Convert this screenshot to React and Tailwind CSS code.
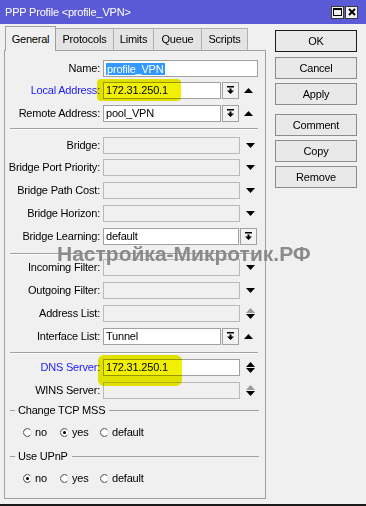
import React from 'react';

// Winbox "PPP Profile" dialog

function UpTri({ color = '#000' }) {
  return (
    <svg width="9" height="5" viewBox="0 0 9 5">
      <path d="M4.5 0L9 5H0z" fill={color} />
    </svg>
  );
}

function DownTri({ color = '#000' }) {
  return (
    <svg width="9" height="5" viewBox="0 0 9 5">
      <path d="M0 0H9L4.5 5z" fill={color} />
    </svg>
  );
}

function UpDown({ upColor = '#000' }) {
  return (
    <svg width="9" height="11" viewBox="0 0 9 11">
      <path d="M4.5 0L9 5H0z" fill={upColor} />
      <path d="M0 6H9L4.5 11z" fill="#000" />
    </svg>
  );
}

function DropBtn() {
  return (
    <div className="w-[17px] h-[17px] border border-[#a0a0a0] bg-[#f3f3f3] flex items-center justify-center">
      <svg width="9" height="9" viewBox="0 0 9 9">
        <rect x="1" y="0" width="7" height="1.5" fill="#000" />
        <path d="M3.5 2.5h2v2H8L4.5 8 1 4.5h2.5z" fill="#000" />
      </svg>
    </div>
  );
}

function Field({ w, children }) {
  return (
    <div className={`${w} h-[17px] border border-[#a0a0a0] bg-white flex items-center pl-[2px] whitespace-nowrap leading-[13px]`}>
      {children}
    </div>
  );
}

function Empty() {
  return <div className="w-[137px] h-[17px] border border-[#b9b9b9] bg-[#f0f0f0]" />;
}

function Row({ label, blue, className = '', children }) {
  return (
    <div className={`flex items-center h-[17px] ${className}`}>
      <div className={`w-[95px] text-right whitespace-nowrap leading-[13px] ${blue ? 'text-[#1a1aff]' : 'text-black'}`}>{label}</div>
      <div className="ml-[3px] flex items-center">{children}</div>
    </div>
  );
}

function Sep({ className = '' }) {
  return <div className={`ml-[5px] w-[248px] border-t border-[#a0a0a0] border-b border-b-white ${className}`} />;
}

function Radio({ checked }) {
  return (
    <svg width="9" height="9" viewBox="0 0 9 9">
      <circle cx="4.5" cy="4.5" r="4" fill="#fff" />
      <path d="M7.3 1.7A4 4 0 1 0 7.3 7.3" stroke="#4a4a4a" strokeWidth="1" fill="none" />
      <path d="M7.3 1.7A4 4 0 0 1 7.3 7.3" stroke="#d8d8d8" strokeWidth="1" fill="none" />
      {checked && <circle cx="4.5" cy="4.5" r="1.5" fill="#000" />}
    </svg>
  );
}

function RadioRow({ value, className = '' }) {
  const opts = [
    ['no', 'w-[37px]'],
    ['yes', 'w-[40px]'],
    ['default', 'w-[60px]'],
  ];
  return (
    <div className={`flex items-center h-[13px] pl-[18px] ${className}`}>
      {opts.map(([o, w]) => (
        <div key={o} className={`${w} flex items-center gap-[3px]`}>
          <Radio checked={o === value} />
          <span>{o}</span>
        </div>
      ))}
    </div>
  );
}

function Group({ title, className = '' }) {
  return (
    <div className={`flex items-center h-[13px] ${className}`}>
      <div className="ml-[5px] w-[5px] border-t border-[#a0a0a0]" />
      <span className="ml-[3px]">{title}</span>
      <div className="ml-[4px] mr-[6px] flex-1 border-t border-[#a0a0a0]" />
    </div>
  );
}

function Btn({ children, ok, className = '' }) {
  return (
    <div
      className={`h-[22px] w-[82px] flex items-center justify-center bg-[#e9e9e9] border ${
        ok ? 'border-[#1c1c1c]' : 'border-[#8c8c8c]'
      } ${className}`}
    >
      {children}
    </div>
  );
}

export default function App() {
  const tabs = [
    ['Protocols', 'w-[58px]'],
    ['Limits', 'w-[40px]'],
    ['Queue', 'w-[48px]'],
    ['Scripts', 'w-[46px]'],
  ];

  return (
    <div className="relative w-[366px] h-[506px] overflow-hidden bg-[#f0f0f0] border-b-[2px] border-[#1a1a1a] font-['Liberation_Sans',Arial,sans-serif] text-[11px] tracking-[-0.2px] text-black">
      {/* Title bar */}
      <div className="h-[24px] bg-[#5a5ad6] flex items-center pl-[5px] pr-[8px] text-white text-[11px]">
        <span>PPP Profile &lt;profile_VPN&gt;</span>
        <div className="ml-auto flex gap-[1px]">
          <div className="w-[13px] h-[13px] bg-[#efefef] border border-[#3a3a3a] flex items-center justify-center">
            <svg width="9" height="8" viewBox="0 0 9 8">
              <rect x="0.5" y="0.5" width="8" height="7" fill="none" stroke="#000" />
              <rect x="0" y="0" width="9" height="2" fill="#000" />
            </svg>
          </div>
          <div className="w-[13px] h-[13px] bg-[#efefef] border border-[#3a3a3a] flex items-center justify-center">
            <svg width="8" height="8" viewBox="0 0 8 8">
              <path d="M1 1L7 7M7 1L1 7" stroke="#000" strokeWidth="1.8" />
            </svg>
          </div>
        </div>
      </div>

      <div className="flex pl-[4px]">
        {/* Left: tabs + panel */}
        <div className="w-[262px] mt-[2px]">
          <div className="flex items-end h-[24px] pl-[1px]">
            <div className="relative z-10 -mb-px w-[51px] h-[25px] bg-[#f0f0f0] border border-b-0 border-[#a0a0a0] flex items-center justify-center">
              General
            </div>
            {tabs.map(([t, w]) => (
              <div key={t} className={`${w} h-[22px] bg-[#e4e4e4] border border-b-0 border-l-0 border-[#b0b0b0] flex items-center justify-center`}>
                {t}
              </div>
            ))}
          </div>

          <div className="h-[449px] border border-[#a0a0a0] flex flex-col">
            <Row label="Name:" className="mt-[9px]">
              <Field w="w-[155px]">
                <span className="bg-[#3399ff] text-white leading-[12px] px-px">profile_VPN</span>
              </Field>
            </Row>
            <Row label="Local Address:" blue className="mt-[5px]">
              <Field w="w-[118px]">172.31.250.1</Field>
              <div className="ml-px"><DropBtn /></div>
              <div className="ml-[5px]"><UpTri /></div>
            </Row>
            <Row label="Remote Address:" className="mt-[6px]">
              <Field w="w-[118px]">pool_VPN</Field>
              <div className="ml-px"><DropBtn /></div>
              <div className="ml-[5px]"><UpTri /></div>
            </Row>

            <Sep className="mt-[6px]" />

            <Row label="Bridge:" className="mt-[7px]">
              <Empty />
              <div className="ml-[6px]"><DownTri /></div>
            </Row>
            <Row label="Bridge Port Priority:" className="mt-[5px]">
              <Empty />
              <div className="ml-[6px]"><DownTri /></div>
            </Row>
            <Row label="Bridge Path Cost:" className="mt-[6px]">
              <Empty />
              <div className="ml-[6px]"><DownTri /></div>
            </Row>
            <Row label="Bridge Horizon:" className="mt-[6px]">
              <Empty />
              <div className="ml-[6px]"><DownTri /></div>
            </Row>
            <Row label="Bridge Learning:" className="mt-[6px]">
              <Field w="w-[136px]">default</Field>
              <div className="ml-px"><DropBtn /></div>
            </Row>

            <Sep className="mt-[8px]" />

            <Row label="Incoming Filter:" className="mt-[4px]">
              <Empty />
              <div className="ml-[6px]"><DownTri /></div>
            </Row>
            <Row label="Outgoing Filter:" className="mt-[6px]">
              <Empty />
              <div className="ml-[6px]"><DownTri /></div>
            </Row>
            <Row label="Address List:" className="mt-[6px]">
              <Empty />
              <div className="ml-[6px]"><UpDown upColor="#9a9a9a" /></div>
            </Row>
            <Row label="Interface List:" className="mt-[6px]">
              <Field w="w-[118px]">Tunnel</Field>
              <div className="ml-px"><DropBtn /></div>
              <div className="ml-[5px]"><UpTri /></div>
            </Row>

            <Sep className="mt-[7px]" />

            <Row label="DNS Server:" blue className="mt-[5px]">
              <Field w="w-[137px]">172.31.250.1</Field>
              <div className="ml-[6px]"><UpDown /></div>
            </Row>
            <Row label="WINS Server:" className="mt-[6px]">
              <Empty />
              <div className="ml-[6px]"><UpDown upColor="#9a9a9a" /></div>
            </Row>

            <Group title="Change TCP MSS" className="mt-[5px]" />
            <RadioRow value="yes" className="mt-[9px]" />
            <Group title="Use UPnP" className="mt-[11px]" />
            <RadioRow value="no" className="mt-[9px]" />
          </div>
        </div>

        {/* Right: buttons */}
        <div className="ml-[9px] mt-[6px] flex flex-col">
          <Btn ok className="h-[21px]">OK</Btn>
          <Btn className="mt-[5px]">Cancel</Btn>
          <Btn className="mt-[4px]">Apply</Btn>
          <Btn className="mt-[9px]">Comment</Btn>
          <Btn className="mt-[4px]">Copy</Btn>
          <Btn className="mt-[4px]">Remove</Btn>
        </div>
      </div>

      {/* Highlighter marks */}
      <div className="absolute left-[97px] top-[79px] w-[84px] h-[22px] rounded-[4px] bg-[#f0f000] mix-blend-multiply blur-[0.6px]" />
      <div className="absolute left-[98px] top-[355px] w-[84px] h-[31px] rounded-[6px] bg-[#f0f000] mix-blend-multiply blur-[0.6px]" />

      {/* Watermark */}
      <div className="absolute left-[57px] top-[246px] text-[21px] leading-[15px] tracking-normal font-bold text-[#8a8a8a] whitespace-nowrap">
        Настройка-Микротик.РФ
      </div>
    </div>
  );
}
